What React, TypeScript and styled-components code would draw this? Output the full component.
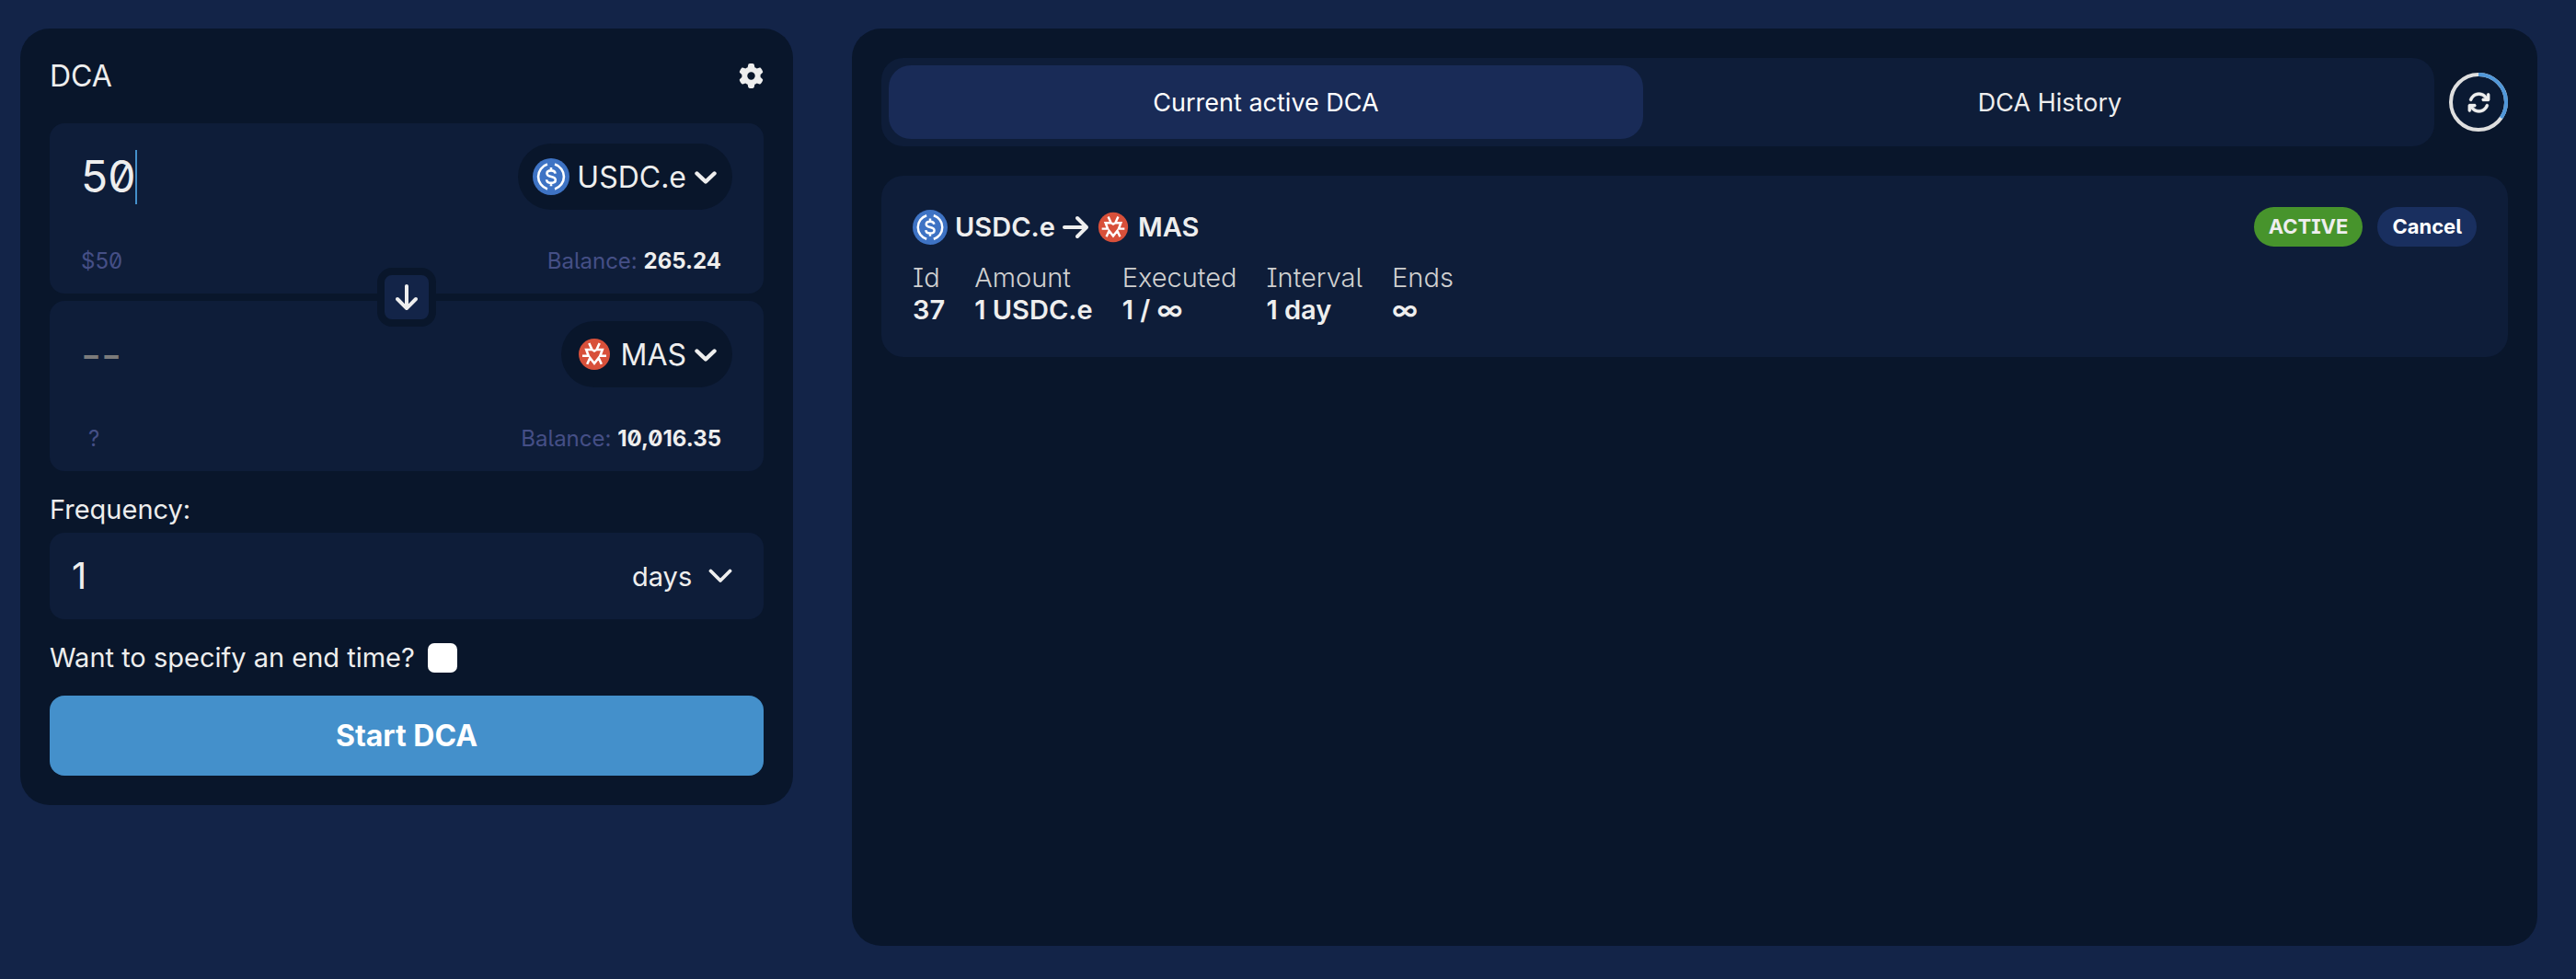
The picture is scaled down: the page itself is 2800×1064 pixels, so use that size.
import React, { useState } from 'react';
import styled, { createGlobalStyle } from 'styled-components';
import { FaArrowDown, FaArrowRight, FaArrowsRotate, FaGear } from 'react-icons/fa6';

const color = {
  page: '#132448',
  panel: '#09162b',
  card: '#0e1d39',
  tab: '#192b57',
  cancel: '#192f5f',
  accent: '#4490cb',
  ring: '#5097d9',
  ringFill: '#0a1932',
  green: '#47942c',
  text: '#eeeeee',
  soft: '#d0d0d0',
  muted: '#454f86',
};

const GlobalStyle = createGlobalStyle`
  *, *::before, *::after { box-sizing: border-box; }
  body {
    margin: 0;
    background: ${color.page};
    color: ${color.text};
    font-family: Inter, "Liberation Sans", sans-serif;
    font-feature-settings: "ss02", "zero";
    font-size: 29px;
    line-height: 35px;
  }
  button, input, select {
    font: inherit;
    font-feature-settings: inherit;
    color: inherit;
    border: 0;
    padding: 0;
    margin: 0;
    background: none;
    outline: none;
  }
  button, select { cursor: pointer; }
  svg { display: block; flex: none; }
`;

const Page = styled.main`
  min-height: 100vh;
  display: grid;
  grid-template-columns: minmax(0, 840fr) minmax(0, 1832fr);
  column-gap: 64px;
  padding: 31px 42px 36px 22px;
`;

const Panel = styled.section`
  display: flex;
  flex-direction: column;
  padding: 32px;
  border-radius: 32px;
  background: ${color.panel};
`;

const SwapPanel = styled(Panel)`
  align-self: start;
`;

const PanelHeader = styled.header`
  display: flex;
  align-items: center;
  justify-content: space-between;
  margin-bottom: 32px;
`;

const Title = styled.h1`
  margin: 0;
  font-size: 32px;
  line-height: 39px;
  font-weight: 400;
`;

const IconButton = styled.button`
  display: grid;
  place-items: center;
  width: 28px;
  height: 28px;
`;

const TokenStack = styled.div`
  position: relative;
  display: grid;
  gap: 8px;
`;

const TokenCard = styled.div`
  display: flex;
  flex-direction: column;
  gap: 40px;
  padding: 22px 34px 20px;
  border-radius: 16px;
  background: ${color.card};
`;

const TokenRow = styled.div`
  display: flex;
  align-items: center;
  justify-content: space-between;
`;

const AmountField = styled.label`
  display: flex;
  align-items: center;
`;

const AmountInput = styled.input`
  field-sizing: content;
  min-width: 24px;
  max-width: 320px;
  font-size: 48px;
  line-height: 58px;
  &::placeholder { color: #7b7b7b; opacity: 1; }
`;

const Caret = styled.span`
  width: 2px;
  height: 59px;
  background: ${color.accent};
`;

const TokenButton = styled.button`
  display: flex;
  align-items: center;
  gap: 8px;
  height: 72px;
  padding: 0 16px;
  border-radius: 36px;
  background: ${color.panel};
  font-size: 32px;
  line-height: 39px;
`;

const Detail = styled.div`
  display: flex;
  align-items: center;
  justify-content: space-between;
  padding-right: 12px;
  font-size: 24px;
  line-height: 31px;
  color: ${color.muted};
`;

const Unknown = styled.span`
  padding-left: 8px;
`;

const Balance = styled.strong`
  font-weight: 700;
  color: ${color.text};
`;

const SwapDirection = styled.button`
  position: absolute;
  top: 50%;
  left: 50%;
  transform: translate(-50%, -50%);
  display: grid;
  place-items: center;
  width: 64px;
  height: 64px;
  border: 8px solid ${color.panel};
  border-radius: 16px;
  background: ${color.page};
`;

const FieldLabel = styled.label`
  margin-top: 24px;
  margin-bottom: 8px;
`;

const FrequencyField = styled.div`
  display: flex;
  align-items: center;
  justify-content: space-between;
  height: 94px;
  padding: 0 34px 0 24px;
  border-radius: 16px;
  background: ${color.card};
`;

const FrequencyInput = styled.input`
  flex: 1;
  min-width: 0;
  font-size: 40px;
  line-height: 48px;
`;

const UnitBox = styled.span`
  display: grid;
  align-items: center;
  justify-items: end;
  > * { grid-area: 1 / 1; }
  > svg { pointer-events: none; }
`;

const UnitSelect = styled.select`
  appearance: none;
  padding-right: 43px;
`;

const CheckRow = styled.label`
  display: flex;
  align-items: center;
  gap: 14px;
  margin: 24px 0;
`;

const Checkbox = styled.input`
  appearance: none;
  width: 32px;
  height: 32px;
  border-radius: 7px;
  background: #fff;
  &:checked { background: ${color.accent}; }
`;

const StartButton = styled.button`
  height: 87px;
  border-radius: 16px;
  background: ${color.accent};
  color: #fff;
  font-size: 32px;
  font-weight: 700;
`;

const TabBar = styled.div`
  display: flex;
  align-items: center;
  gap: 16px;
  margin-bottom: 32px;
`;

const Tabs = styled.div`
  flex: 1;
  display: grid;
  grid-template-columns: 1fr 1fr;
  column-gap: 32px;
  padding: 8px;
  border-radius: 24px;
  background: ${color.card};
`;

const Tab = styled.button<{ $active: boolean }>`
  height: 80px;
  border-radius: 24px;
  font-size: 27px;
  background: ${(p) => (p.$active ? color.tab : 'transparent')};
  color: ${(p) => (p.$active ? '#fff' : color.text)};
`;

const RefreshButton = styled.button`
  display: grid;
  place-items: center;
  width: 64px;
  height: 64px;
  > * { grid-area: 1 / 1; }
`;

const RefreshIcon = styled(FaArrowsRotate)`
  stroke: currentColor;
  stroke-width: 8px;
`;

const OrderCard = styled.article`
  display: flex;
  flex-direction: column;
  gap: 16px;
  padding: 34px;
  border-radius: 24px;
  background: ${color.card};
`;

const OrderHeader = styled.header`
  display: flex;
  align-items: center;
  justify-content: space-between;
`;

const Pair = styled.h2`
  display: flex;
  align-items: center;
  gap: 8px;
  margin: 0;
  font-size: 29px;
  line-height: 43px;
  font-weight: 600;
`;

const PairArrow = styled(FaArrowRight)`
  width: 28px;
  height: 32px;
`;

const OrderActions = styled.div`
  display: flex;
  gap: 16px;
`;

const Badge = styled.span`
  padding: 0 16px;
  border-radius: 22px;
  background: ${color.green};
  font-size: 22px;
  line-height: 43px;
  font-weight: 700;
`;

const CancelButton = styled(Badge).attrs({ as: 'button' })`
  background: ${color.cancel};
  color: #fff;
`;

const Facts = styled.table`
  align-self: start;
  border-collapse: collapse;
  th, td {
    padding: 0 32px 0 0;
    text-align: left;
    white-space: nowrap;
  }
  th { font-weight: 300; color: ${color.soft}; }
  td { font-weight: 600; }
`;

const UsdcLogo = ({ size }: { size: number }) => (
  <svg width={size} height={size} viewBox="0 0 40 40" aria-hidden="true">
    <circle cx="20" cy="20" r="20" fill="#3e73c4" />
    <g fill="none" stroke="#fff" strokeWidth="2.6">
      <path d="M16 6.6a14 14 0 0 0 0 26.8M24 6.6a14 14 0 0 1 0 26.8" />
      <path d="M24.6 16.6c-.3-2.200-2-3.200-4.600-3.200s-4.500 1.200-4.500 3.200c0 4.900 9.300 2 9.300 7 0 2.200-2 3.300-4.800 3.300s-4.800-1.200-4.900-3.600M20 10v3.600M20 26.600v3.600" />
    </g>
  </svg>
);

const MasLogo = ({ size }: { size: number }) => (
  <svg width={size} height={size} viewBox="0 0 40 40" aria-hidden="true">
    <circle cx="20" cy="20" r="17" fill="#d8503a" />
    <path
      fill="none"
      stroke="#fff"
      strokeWidth="2.600"
      d="M14.300 8l3 6.500M25.700 8l-3 6.500M7 21.700h6.700L11.200 15h6.300L20 16.500 22.500 15h6.300l-2.500 6.700H33M12.200 30.800l3.100-6.800 4.700 6 4.700-6 3.100 6.800"
    />
  </svg>
);

const TokenChevron = () => (
  <svg width="26" height="28" viewBox="1 0 26 28" fill="none" aria-hidden="true">
    <path d="M4.500 10.500l9.500 9 9.500-9" stroke={color.text} strokeWidth="4.400" strokeLinecap="round" strokeLinejoin="round" />
  </svg>
);

const UnitChevron = () => (
  <svg width="26" height="16" viewBox="0 0 26 16" fill="none" aria-hidden="true">
    <path d="M2.500 2.500L13 13 23.500 2.500" stroke={color.text} strokeWidth="3.800" strokeLinecap="round" strokeLinejoin="round" />
  </svg>
);

const CountdownRing = () => (
  <svg width="64" height="64" viewBox="0 0 64 64" fill="none" aria-hidden="true">
    <circle cx="32" cy="32" r="30" fill={color.ringFill} stroke="#dfdfdf" strokeWidth="4" />
    <path d="M32 2a30 30 0 0 1 24.600 47.200" stroke={color.ring} strokeWidth="4" />
  </svg>
);

const facts = [
  { label: 'Id', value: '37' },
  { label: 'Amount', value: '1 USDC.e' },
  { label: 'Executed', value: '1 / ∞' },
  { label: 'Interval', value: '1 day' },
  { label: 'Ends', value: '∞' },
];

const tabs = ['Current active DCA', 'DCA History'];

export default function App() {
  const [amount, setAmount] = useState('50');
  const [every, setEvery] = useState('1');
  const [tab, setTab] = useState(0);

  return (
    <>
      <GlobalStyle />
      <Page>
        <SwapPanel>
          <PanelHeader>
            <Title>DCA</Title>
            <IconButton aria-label="Settings">
              <FaGear size={27} />
            </IconButton>
          </PanelHeader>

          <TokenStack>
            <TokenCard>
              <TokenRow>
                <AmountField>
                  <AmountInput
                    aria-label="Amount to spend"
                    value={amount}
                    onChange={(e) => setAmount(e.target.value)}
                  />
                  <Caret />
                </AmountField>
                <TokenButton>
                  <UsdcLogo size={40} />
                  USDC.e
                  <TokenChevron />
                </TokenButton>
              </TokenRow>
              <Detail>
                <span>${amount}</span>
                <span>
                  Balance: <Balance>265.24</Balance>
                </span>
              </Detail>
            </TokenCard>
            <TokenCard>
              <TokenRow>
                <AmountField>
                  <AmountInput aria-label="Amount to receive" placeholder="--" readOnly />
                </AmountField>
                <TokenButton>
                  <MasLogo size={40} />
                  MAS
                  <TokenChevron />
                </TokenButton>
              </TokenRow>
              <Detail>
                <Unknown>?</Unknown>
                <span>
                  Balance: <Balance>10,016.35</Balance>
                </span>
              </Detail>
            </TokenCard>
            <SwapDirection aria-label="Swap direction">
              <FaArrowDown size={32} />
            </SwapDirection>
          </TokenStack>

          <FieldLabel htmlFor="frequency">Frequency:</FieldLabel>
          <FrequencyField>
            <FrequencyInput id="frequency" value={every} onChange={(e) => setEvery(e.target.value)} />
            <UnitBox>
              <UnitSelect aria-label="Frequency unit" defaultValue="days">
                <option>days</option>
              </UnitSelect>
              <UnitChevron />
            </UnitBox>
          </FrequencyField>

          <CheckRow>
            Want to specify an end time?
            <Checkbox type="checkbox" />
          </CheckRow>
          <StartButton>Start DCA</StartButton>
        </SwapPanel>

        <Panel>
          <TabBar>
            <Tabs role="tablist">
              {tabs.map((name, i) => (
                <Tab key={name} role="tab" aria-selected={i === tab} $active={i === tab} onClick={() => setTab(i)}>
                  {name}
                </Tab>
              ))}
            </Tabs>
            <RefreshButton aria-label="Refresh">
              <CountdownRing />
              <RefreshIcon size={25} />
            </RefreshButton>
          </TabBar>

          <OrderCard>
            <OrderHeader>
              <Pair>
                <UsdcLogo size={38} />
                USDC.e
                <PairArrow />
                <MasLogo size={38} />
                MAS
              </Pair>
              <OrderActions>
                <Badge>ACTIVE</Badge>
                <CancelButton>Cancel</CancelButton>
              </OrderActions>
            </OrderHeader>
            <Facts>
              <thead>
                <tr>
                  {facts.map((f) => (
                    <th key={f.label} scope="col">{f.label}</th>
                  ))}
                </tr>
              </thead>
              <tbody>
                <tr>
                  {facts.map((f) => (
                    <td key={f.label}>{f.value}</td>
                  ))}
                </tr>
              </tbody>
            </Facts>
          </OrderCard>
        </Panel>
      </Page>
    </>
  );
}
